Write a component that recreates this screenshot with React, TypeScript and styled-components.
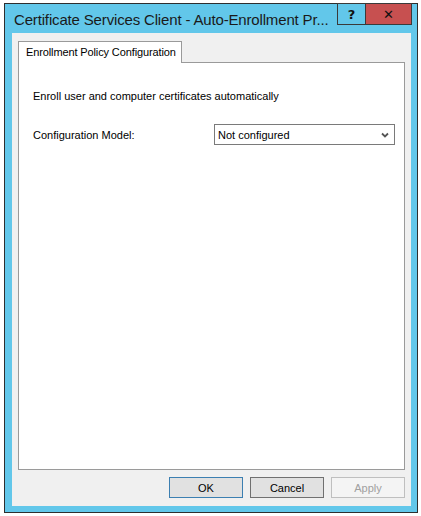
import React from "react";
import styled, { createGlobalStyle } from "styled-components";

const Global = createGlobalStyle`
  html, body { margin: 0; padding: 0; background: #ffffff; }
  body { font-family: "Liberation Sans", Arial, sans-serif; }
`;

const Page = styled.div`
  padding: 3px 0 0 4px;
`;

const Window = styled.div`
  box-sizing: border-box;
  width: 414px;
  height: 510px;
  border: 1px solid #2e2e2e;
  background: #62c7ea;
  display: flex;
  flex-direction: column;
  padding: 0 6px 6px 7px;
`;

const TitleBar = styled.div`
  height: 29px;
  display: flex;
  align-items: flex-start;
  flex-shrink: 0;
`;

const Title = styled.div`
  flex: 1;
  font-size: 15px;
  letter-spacing: -0.16px;
  color: #1a1a1a;
  padding: 7px 0 0 2px;
  white-space: nowrap;
  overflow: hidden;
`;

const CaptionGroup = styled.div`
  display: flex;
  margin-right: -1px;
`;

const CaptionButton = styled.div<{ $close?: boolean }>`
  box-sizing: border-box;
  height: 22px;
  width: ${(p) => (p.$close ? "46px" : "29px")};
  margin-top: -1px;
  background: ${(p) => (p.$close ? "#c75050" : "#62c7ea")};
  border: 1px solid #3a3a3a;
  border-left: ${(p) => (p.$close ? "none" : "1px solid #3a3a3a")};
  display: flex;
  align-items: center;
  justify-content: center;
  font-family: "DejaVu Sans", sans-serif;
  font-weight: bold;
  font-size: 13px;
  color: #111;
`;

const Client = styled.div`
  flex: 1;
  background: #f0f0f0;
  display: flex;
  flex-direction: column;
  padding: 8px 6px 8px 6px;
`;

const TabStrip = styled.div`
  display: flex;
`;

const Tab = styled.div`
  box-sizing: border-box;
  width: 164px;
  height: 22px;
  margin-bottom: -1px;
  background: #ffffff;
  border: 1px solid #9a9a9a;
  border-bottom: none;
  font-size: 11px;
  letter-spacing: -0.12px;
  white-space: nowrap;
  color: #000;
  padding: 4px 0 0 7px;
  position: relative;
  z-index: 1;
`;

const Panel = styled.div`
  box-sizing: border-box;
  height: 408px;
  background: #ffffff;
  border: 1px solid #9a9a9a;
  padding: 25px 9px 0 14px;
  display: flex;
  flex-direction: column;
`;

const Label = styled.div`
  font-size: 11px;
  color: #000;
  line-height: 16px;
  white-space: nowrap;
`;

const FieldRow = styled.div`
  display: flex;
  align-items: center;
  justify-content: space-between;
  margin-top: 20px;
`;

const Select = styled.div`
  box-sizing: border-box;
  width: 181px;
  height: 21px;
  border: 1px solid #7a7a7a;
  display: flex;
  align-items: center;
  justify-content: space-between;
  padding: 0 5px 0 3px;
  font-size: 11px;
  color: #000;
`;

const ButtonRow = styled.div`
  display: flex;
  justify-content: flex-end;
  gap: 7px;
  margin-top: 7px;
`;

const Button = styled.div<{ $variant?: "default" | "normal" | "disabled" }>`
  box-sizing: border-box;
  width: 74px;
  height: 21px;
  display: flex;
  align-items: center;
  justify-content: center;
  font-size: 11px;
  background: ${(p) => (p.$variant === "disabled" ? "#f4f4f4" : "#e1e1e1")};
  color: ${(p) => (p.$variant === "disabled" ? "#a0a0a0" : "#000")};
  border: 1px solid
    ${(p) =>
      p.$variant === "default"
        ? "#3c7fb1"
        : p.$variant === "disabled"
        ? "#bfbfbf"
        : "#707070"};
`;

const Chevron = () => (
  <svg width="8" height="6" viewBox="0 0 8 6">
    <path d="M1 1.5 L4 4.5 L7 1.5" stroke="#555" strokeWidth="1.8" fill="none" />
  </svg>
);

export default function App() {
  return (
    <Page>
      <Global />
      <Window>
        <TitleBar>
          <Title>Certificate Services Client - Auto-Enrollment Pr...</Title>
          <CaptionGroup>
            <CaptionButton>?</CaptionButton>
            <CaptionButton $close>✕</CaptionButton>
          </CaptionGroup>
        </TitleBar>
        <Client>
          <TabStrip>
            <Tab>Enrollment Policy Configuration</Tab>
          </TabStrip>
          <Panel>
            <Label>Enroll user and computer certificates automatically</Label>
            <FieldRow>
              <Label>Configuration Model:</Label>
              <Select>
                <span>Not configured</span>
                <Chevron />
              </Select>
            </FieldRow>
          </Panel>
          <ButtonRow>
            <Button $variant="default">OK</Button>
            <Button $variant="normal">Cancel</Button>
            <Button $variant="disabled">Apply</Button>
          </ButtonRow>
        </Client>
      </Window>
    </Page>
  );
}
